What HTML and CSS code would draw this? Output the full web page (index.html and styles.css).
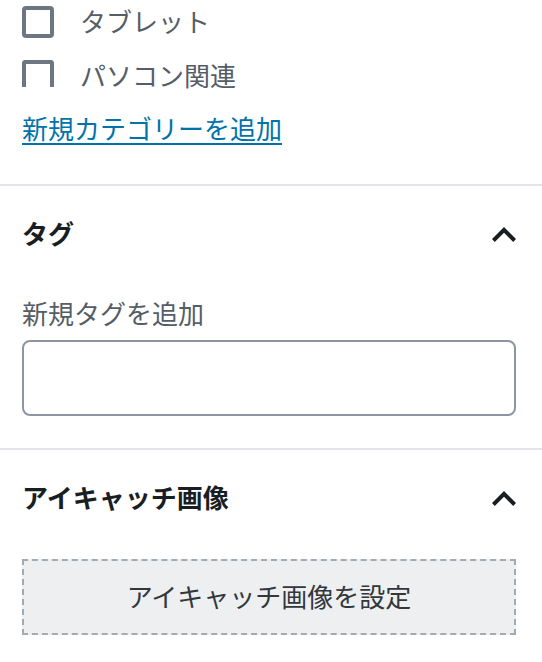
FILE: index.html
```html
<!DOCTYPE html>
<html lang="ja">
<head>
<meta charset="utf-8">
<link rel="stylesheet" href="styles.css">
</head>
<body>
<div class="sidebar">
  <section class="panel panel-cats">
    <div class="cat-list">
      <label class="cat-row"><span class="checkbox"></span><span class="cat-name">タブレット</span></label>
      <label class="cat-row cat-row-cut"><span class="checkbox"></span><span class="cat-name">パソコン関連</span></label>
    </div>
    <a class="add-link" href="#">新規カテゴリーを追加</a>
  </section>

  <section class="panel">
    <div class="panel-head">
      <h2 class="panel-title">タグ</h2>
      <svg class="chevron" viewBox="6 8 12 7.41" width="24" height="15" aria-hidden="true"><path d="M12 8l-6 6 1.41 1.41L12 10.83l4.59 4.58L18 14z"/></svg>
    </div>
    <div class="panel-body">
      <label class="field-label" for="tag">新規タグを追加</label>
      <input class="text-input" id="tag" type="text">
    </div>
  </section>

  <section class="panel">
    <div class="panel-head">
      <h2 class="panel-title">アイキャッチ画像</h2>
      <svg class="chevron" viewBox="6 8 12 7.41" width="24" height="15" aria-hidden="true"><path d="M12 8l-6 6 1.41 1.41L12 10.83l4.59 4.58L18 14z"/></svg>
    </div>
    <div class="panel-body">
      <button class="featured-toggle" type="button">アイキャッチ画像を設定</button>
    </div>
  </section>
</div>
</body>
</html>
```

FILE: styles.css
```css
html, body {
  margin: 0;
  padding: 0;
  background: #fff;
  overflow: hidden;
}

body {
  font-family: "Noto Sans CJK JP", "Noto Sans", sans-serif;
  font-size: 26px;
  line-height: 36px;
  color: #555d66;
}

.sidebar {
  width: 542px;
}

.panel {
  border-top: 2px solid #e2e4e7;
}

.panel-cats {
  border-top: none;
  padding: 0 26px 38px 22px;
}

.cat-list {
  display: flex;
  flex-direction: column;
  gap: 22px;
  padding-top: 6px;
}

.cat-row {
  display: flex;
  align-items: center;
  gap: 26px;
  height: 32px;
}

.checkbox {
  width: 32px;
  height: 32px;
  box-sizing: border-box;
  border: 4px solid #6c7781;
  border-radius: 4px;
  flex: none;
}

/* the list is scrolled: the last box is cut by the scroll area's edge */
.cat-row-cut .checkbox {
  align-self: flex-start;
  height: 27px;
  border-bottom: none;
  border-radius: 4px 4px 0 0;
}

.cat-name {
  color: #555d66;
  line-height: 26px;
  margin-top: -3px;
}

.add-link {
  display: inline-block;
  margin-top: 18px;
  color: #0073aa;
  text-decoration: underline;
  text-decoration-thickness: 2px;
  text-underline-offset: 4px;
}

.panel-head {
  height: 96px;
  box-sizing: border-box;
  display: flex;
  align-items: center;
  justify-content: space-between;
  padding: 0 26px 3px 22px;
}

.panel-title {
  margin: 0;
  font-size: 26px;
  font-weight: 700;
  color: #191e23;
}

.chevron {
  fill: #191e23;
  display: block;
  margin-top: 3px;
}

.panel-body {
  padding: 13px 26px 32px 22px;
}

.field-label {
  display: block;
  margin-bottom: 9px;
  color: #555d66;
}

.text-input {
  display: block;
  width: 100%;
  height: 76px;
  box-sizing: border-box;
  border: 2px solid #8d96a0;
  border-radius: 8px;
  margin: 0;
  padding: 0 16px;
  font: inherit;
  background: #fff;
}

.featured-toggle {
  display: block;
  width: 100%;
  height: 76px;
  box-sizing: border-box;
  border: 2px dashed #a2aab2;
  background: #edeff0;
  margin: 0;
  padding: 0 0 3px;
  font: inherit;
  color: #32373c;
  text-align: center;
}
```
